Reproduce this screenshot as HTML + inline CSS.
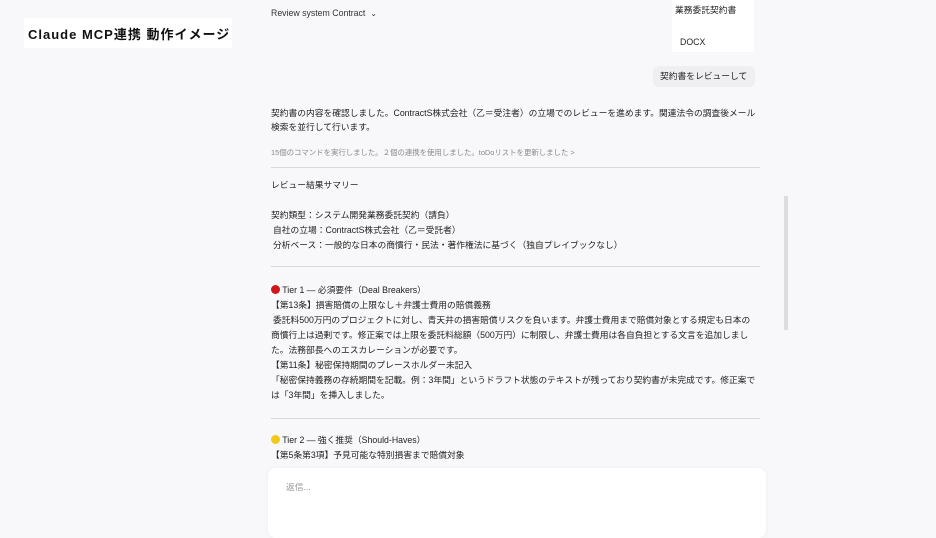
<!DOCTYPE html>
<html><head><meta charset="utf-8"><style>
*{margin:0;padding:0;box-sizing:border-box}
body{width:936px;height:526px;overflow:hidden;background:#f8f8fa;font-family:"Liberation Sans","Noto Sans CJK JP",sans-serif;color:#222;position:relative}
.a{position:absolute;white-space:nowrap}
.t{font-size:8.75px;line-height:15px}
.hr{position:absolute;left:271px;width:489px;height:1px;background:#d8d8dc}
</style></head><body>
<div class="a" style="left:24px;top:18px;width:208px;height:30px;background:#fff"></div>
<div class="a" style="left:28px;top:24px;font-size:13px;font-weight:bold;letter-spacing:1px;color:#111">Claude MCP連携 動作イメージ</div>
<div class="a t" style="left:271px;top:6px;color:#333">Review system Contract &nbsp;<span style="font-size:8px">&#8964;</span></div>
<div class="a" style="left:672px;top:0;width:82px;height:52px;background:#fff"></div>
<div class="a t" style="left:675px;top:3px">業務委託契約書</div>
<div class="a t" style="left:680px;top:35px">DOCX</div>
<div class="a" style="left:653px;top:66px;width:102px;height:21px;background:#efeff1;border-radius:6px"></div>
<div class="a t" style="left:660px;top:69px">契約書をレビューして</div>
<div class="a t" style="left:271px;top:106px">契約書の内容を確認しました。ContractS株式会社（乙＝受注者）の立場でのレビューを進めます。関連法令の調査後メール</div>
<div class="a t" style="left:271px;top:120px">検索を並行して行います。</div>
<div class="a" style="left:271px;top:147px;font-size:7.4px;color:#888">15個のコマンドを実行しました。２個の連携を使用しました。toDoリストを更新しました &gt;</div>
<div class="hr" style="top:167px"></div>
<div class="a t" style="left:271px;top:178px">レビュー結果サマリー</div>
<div class="a t" style="left:271px;top:208px">契約類型：システム開発業務委託契約（請負）</div>
<div class="a t" style="left:273px;top:223px">自社の立場：ContractS株式会社（乙＝受託者）</div>
<div class="a t" style="left:273px;top:238px">分析ベース：一般的な日本の商慣行・民法・著作権法に基づく（独自プレイブックなし）</div>
<div class="hr" style="top:266px"></div>
<div class="a" style="left:784px;top:196px;width:4px;height:134px;background:#ddd"></div>
<div class="a t" style="left:271px;top:283px"><span style="display:inline-block;width:9px;height:9px;border-radius:50%;background:#d0161b;vertical-align:-1px"></span> Tier 1 — 必須要件（Deal Breakers）</div>
<div class="a t" style="left:271px;top:298px">【第13条】損害賠償の上限なし＋弁護士費用の賠償義務</div>
<div class="a t" style="left:273px;top:313px">委託料500万円のプロジェクトに対し、青天井の損害賠償リスクを負います。弁護士費用まで賠償対象とする規定も日本の</div>
<div class="a t" style="left:271px;top:328px">商慣行上は過剰です。修正案では上限を委託料総額（500万円）に制限し、弁護士費用は各自負担とする文言を追加しまし</div>
<div class="a t" style="left:271px;top:343px">た。法務部長へのエスカレーションが必要です。</div>
<div class="a t" style="left:271px;top:358px">【第11条】秘密保持期間のプレースホルダー未記入</div>
<div class="a t" style="left:271px;top:373px">「秘密保持義務の存続期間を記載。例：3年間」というドラフト状態のテキストが残っており契約書が未完成です。修正案で</div>
<div class="a t" style="left:271px;top:388px">は「3年間」を挿入しました。</div>
<div class="hr" style="top:418px"></div>
<div class="a t" style="left:271px;top:433px"><span style="display:inline-block;width:9px;height:9px;border-radius:50%;background:#f2c81a;vertical-align:-1px"></span> Tier 2 — 強く推奨（Should-Haves）</div>
<div class="a t" style="left:271px;top:448px">【第5条第3項】予見可能な特別損害まで賠償対象</div>
<div class="a" style="left:268px;top:468px;width:498px;height:70px;background:#fff;border-radius:8px;box-shadow:0 0 4px rgba(0,0,0,0.05)"></div>
<div class="a t" style="left:286px;top:480px;color:#999">返信...</div>
</body></html>
